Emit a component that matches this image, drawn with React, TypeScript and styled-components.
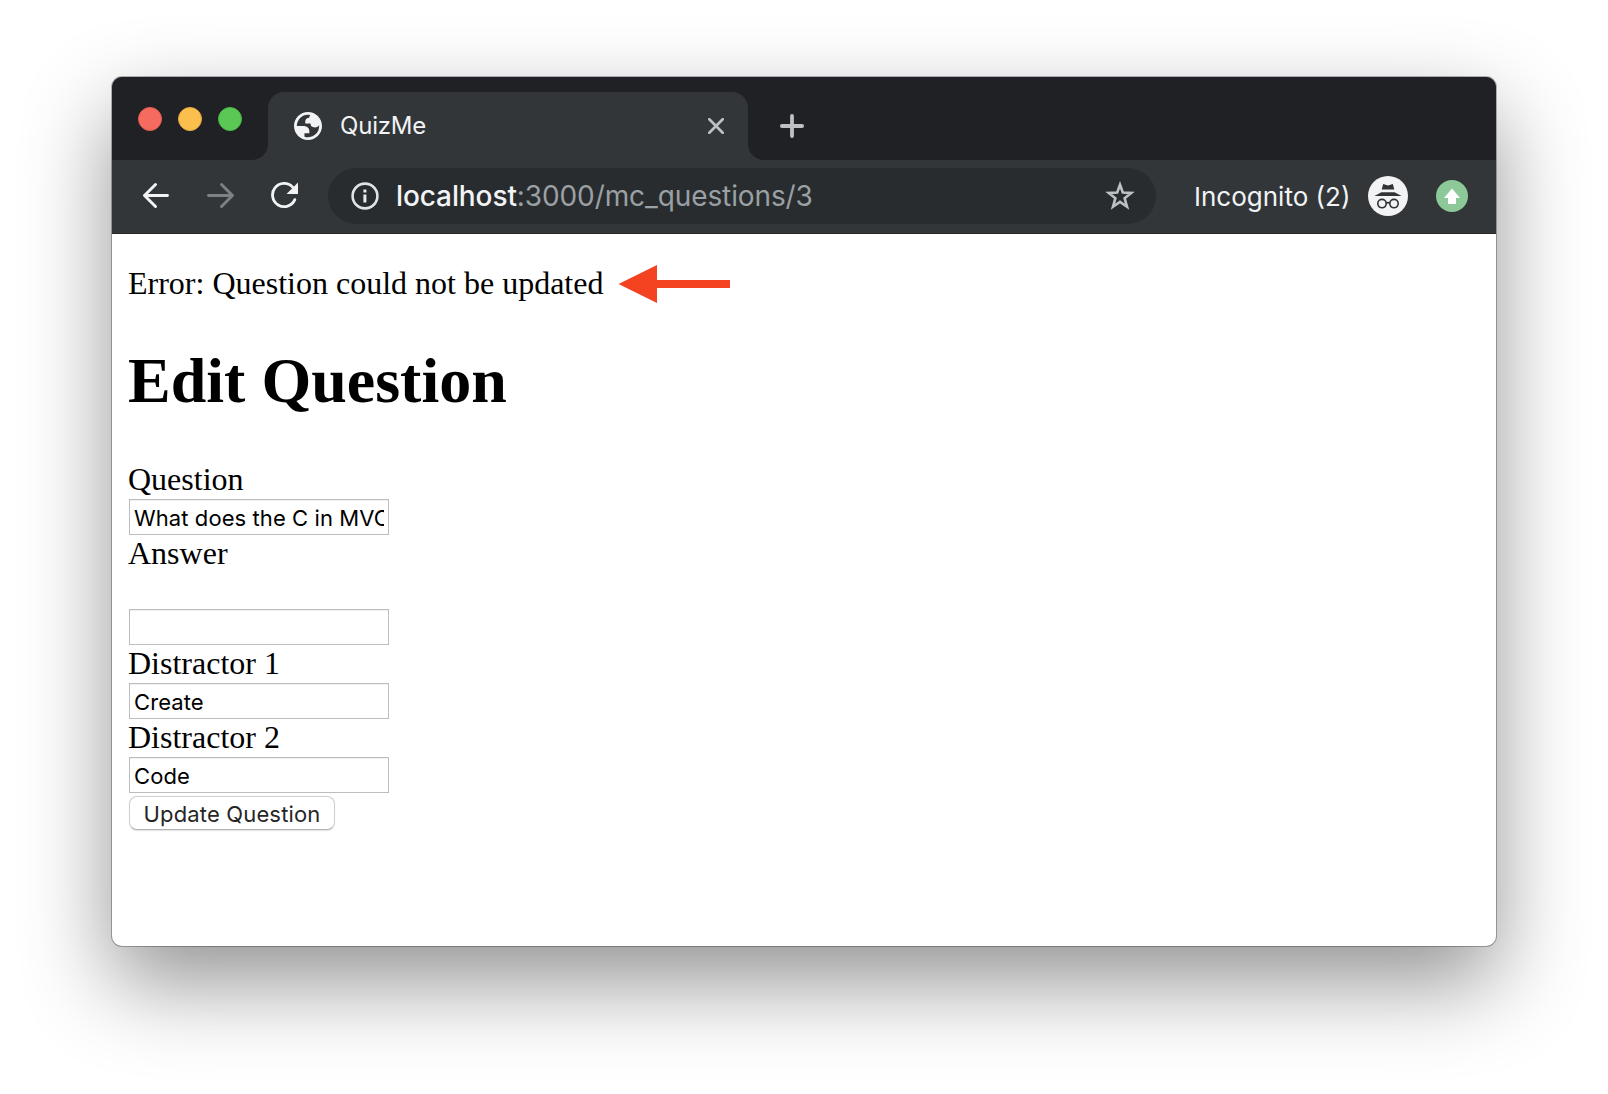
import React from "react";
import styled, { createGlobalStyle } from "styled-components";

const colors = {
  frame: "#202124",
  toolbar: "#323639",
  omnibox: "#282c2f",
  bright: "#f1f3f4",
  muted: "#9aa0a3",
};

const GlobalStyle = createGlobalStyle`
  *, *::before, *::after { box-sizing: border-box; }
  body { margin: 0; background: #fff; }
`;

const Desktop = styled.main`
  height: 1094px;
  overflow: hidden;
  padding: 77px 112px 0;
`;

const Window = styled.div`
  display: flex;
  flex-direction: column;
  width: 1384px;
  height: 869px;
  border-radius: 10px;
  overflow: hidden;
  background: #fff;
  box-shadow: 0 0 0 1px rgba(0, 0, 0, 0.28), 0 36px 88px rgba(0, 0, 0, 0.43);
`;

const TabStrip = styled.div`
  display: flex;
  height: 83px;
  background: ${colors.toolbar};
`;

const StripStart = styled.div`
  display: flex;
  gap: 16px;
  width: 156px;
  padding: 30px 0 0 26px;
  background: ${colors.frame};
  border-bottom-right-radius: 16px;
`;

const Light = styled.span<{ $fill: string; $edge: string }>`
  width: 24px;
  height: 24px;
  border-radius: 50%;
  background: ${(p) => p.$fill};
  border: 1px solid ${(p) => p.$edge};
`;

const TabSlot = styled.div`
  width: 480px;
  background: linear-gradient(${colors.frame} 40px, ${colors.toolbar} 40px);
  padding-top: 15px;
`;

const Tab = styled.div`
  display: flex;
  align-items: center;
  height: 68px;
  padding: 0 24px 0 26px;
  background: ${colors.toolbar};
  border-radius: 16px 16px 0 0;
`;

const TabTitle = styled.span`
  flex: 1;
  margin-left: 18px;
  font: 400 24px/32px Inter, sans-serif;
  letter-spacing: -0.2px;
  color: ${colors.bright};
`;

const StripEnd = styled.div`
  flex: 1;
  padding: 37px 0 0 32px;
  background: ${colors.frame};
  border-bottom-left-radius: 16px;
`;

const Toolbar = styled.div`
  display: flex;
  align-items: center;
  height: 74px;
  padding: 0 28px 1px 31px;
  background: ${colors.toolbar};
  border-bottom: 1px solid #242628;
`;

const NavButtons = styled.div`
  display: flex;
  gap: 36px;
  margin-right: 29px;
`;

const Omnibox = styled.div`
  display: flex;
  align-items: center;
  width: 828px;
  height: 56px;
  padding: 0 21px 0 23px;
  border-radius: 28px;
  background: ${colors.omnibox};
`;

const Url = styled.span`
  flex: 1;
  margin-left: 17px;
  font: 400 28px/36px Inter, sans-serif;
  letter-spacing: -0.1px;
  color: ${colors.muted};
`;

const Host = styled.span`
  font-weight: 450;
  color: ${colors.bright};
`;

const Profile = styled.span`
  width: 156px;
  margin: 1px 18px 0 38px;
  white-space: nowrap;
  font: 400 26px/36px Inter, sans-serif;
  color: ${colors.bright};
`;

const Extension = styled.span`
  display: flex;
  margin-left: 28px;
`;

const Page = styled.div`
  flex: 1;
  padding: 31px 16px 0;
  font: 32px/36px "Liberation Serif", serif;
  color: #000;
`;

const Notice = styled.p`
  display: flex;
  align-items: center;
  gap: 15px;
  height: 36px;
  margin: 0 0 44px;
`;

const Heading = styled.h1`
  margin: 0 0 44px;
  font-size: 64px;
  line-height: 72px;
  font-weight: 700;
`;

const Form = styled.form`
  display: flex;
  flex-direction: column;
  align-items: flex-start;
`;

const Label = styled.label<{ $spaced?: boolean }>`
  margin-bottom: ${(p) => (p.$spaced ? 38 : 2)}px;
`;

const Field = styled.input`
  width: 260px;
  height: 36px;
  margin: 0 0 0 1px;
  padding: 2px 4px 0;
  border: 1px solid #bdbdbd;
  border-radius: 0;
  box-shadow: inset 0 1px 0 #f0f0f0;
  outline: 0;
  background: #fff;
  font: 400 22px/30px Inter, sans-serif;
  letter-spacing: 0.08px;
  color: #000;
`;

const Submit = styled.button`
  width: 206px;
  height: 34px;
  margin: 3px 0 0 1px;
  padding: 1px 0 0;
  border: 1px solid #cfcfcf;
  border-bottom-color: #b4b4b4;
  border-radius: 8px;
  box-shadow: 0 1px 1px rgba(0, 0, 0, 0.12);
  background: #fff;
  white-space: nowrap;
  font: 400 22px/30px Inter, sans-serif;
  letter-spacing: 0.15px;
  color: #262626;
`;

const Icon = styled.svg`
  display: block;
  flex: none;
`;

const PointerIcon = styled(Icon)`
  margin: 0 0 -2px;
`;

const Globe = () => (
  <Icon width="28" height="28" viewBox="2 2 20 20" fill={colors.bright} fillRule="evenodd">
    <path d="M12 2C6.48 2 2 6.48 2 12s4.48 10 10 10 10-4.48 10-10S17.52 2 12 2zM4 12h4.4c3.407.022 4.922 1.73 4.543 5.127H9.488v2.47a8.004 8.004 0 0 0 10.498-8.083C19.327 12.504 18.332 13 17 13c-2.137 0-3.206-.916-3.206-2.75h-3.748c-.274-2.728.683-4.092 2.87-4.092 0-.975.327-1.597.811-1.97A8.004 8.004 0 0 0 4 12z" />
  </Icon>
);

const CloseTab = () => (
  <Icon width="16" height="16" viewBox="0 0 16 16" stroke="#bdc1c4" strokeWidth="2.7" strokeLinecap="round">
    <path d="M1.3 1.3L14.7 14.7M14.7 1.3L1.3 14.7" />
  </Icon>
);

const NewTab = () => (
  <Icon width="24" height="24" viewBox="0 0 24 24" stroke="#bdc1c6" strokeWidth="3.8" strokeLinecap="round">
    <path d="M12 1.9V22.1M1.9 12H22.1" />
  </Icon>
);

const NavArrow = ({ forward }: { forward?: boolean }) => (
  <Icon
    width="28"
    height="28"
    viewBox="0 0 28 28"
    fill="none"
    stroke={forward ? "#7d8183" : colors.bright}
    strokeWidth="2.9"
    strokeLinecap="round"
    strokeLinejoin="round"
  >
    <path d={forward ? "M1.5 13.5H25.5M14.5 2.5L25.5 13.5L14.5 24.5" : "M24.5 13.5H1.5M12.5 2.5L1.5 13.5L12.5 24.5"} />
  </Icon>
);

const Reload = () => (
  <Icon width="28" height="28" viewBox="0 0 28 28">
    <path d="M21.6 5.1A11.6 11.6 0 1 0 23.8 17.6" fill="none" stroke={colors.bright} strokeWidth="2.8" strokeLinecap="round" />
    <path d="M27 0.5V12H15.5Z" fill={colors.bright} />
  </Icon>
);

const Info = () => (
  <Icon width="28" height="28" viewBox="0 0 28 28">
    <circle cx="14" cy="14" r="12.4" fill="none" stroke="#e0e2e5" strokeWidth="2.6" />
    <path d="M12.4 7.6H15.4V10.4H12.4ZM12.4 12.6H15.4V20.6H12.4Z" fill="#e8eaed" />
  </Icon>
);

const Star = () => (
  <Icon width="30" height="30" viewBox="0 0 30 30">
    <path
      d="M15 3.8L17.8 11.5L26.3 11.9L19.6 17.2L22 25.7L15 20.9L8 25.7L10.4 17.2L3.7 11.9L12.2 11.5Z"
      fill="none"
      stroke="#bdc1c6"
      strokeWidth="2.6"
    />
  </Icon>
);

const Incognito = () => (
  <Icon width="40" height="40" viewBox="0 0 40 40">
    <circle cx="20" cy="20" r="20" fill={colors.bright} />
    <path d="M15.2 8L20 9.4L24.8 8L26.3 13.6H13.7Z" fill="#303437" />
    <path d="M13.4 16.2H26.6L33.6 20H6.4Z" fill="#303437" />
    <g fill="none" stroke="#303437" strokeWidth="1.6">
      <circle cx="14" cy="27.6" r="4.2" />
      <circle cx="26" cy="27.6" r="4.2" />
      <path d="M18.1 27.2Q20 26 21.9 27.2" />
    </g>
  </Icon>
);

const UpdateBadge = () => (
  <Icon width="32" height="32" viewBox="0 0 32 32">
    <circle cx="16" cy="16" r="16" fill="#8cc898" />
    <path d="M16 8.4L24 18H20V24H12V18H8Z" fill="#fff" />
  </Icon>
);

const Pointer = () => (
  <PointerIcon width="112" height="38" viewBox="0 0 112 38">
    <path d="M0.5 19L39 0V15H112V23H39V38Z" fill="#f44321" />
  </PointerIcon>
);

const lights = [
  { fill: "#f56b60", edge: "#e35c50" },
  { fill: "#fabf4d", edge: "#e3a842" },
  { fill: "#5bc755", edge: "#4bb446" },
];

const fields = [
  { id: "question", label: "Question", value: "What does the C in MVC stand for?" },
  { id: "answer", label: "Answer", value: "", spaced: true },
  { id: "distractor_1", label: "Distractor 1", value: "Create" },
  { id: "distractor_2", label: "Distractor 2", value: "Code" },
];

export default function App() {
  return (
    <Desktop>
      <GlobalStyle />
      <Window>
        <TabStrip>
          <StripStart>
            {lights.map((l) => (
              <Light key={l.fill} $fill={l.fill} $edge={l.edge} />
            ))}
          </StripStart>
          <TabSlot>
            <Tab>
              <Globe />
              <TabTitle>QuizMe</TabTitle>
              <CloseTab />
            </Tab>
          </TabSlot>
          <StripEnd>
            <NewTab />
          </StripEnd>
        </TabStrip>
        <Toolbar>
          <NavButtons>
            <NavArrow />
            <NavArrow forward />
            <Reload />
          </NavButtons>
          <Omnibox>
            <Info />
            <Url>
              <Host>localhost</Host>:3000/mc_questions/3
            </Url>
            <Star />
          </Omnibox>
          <Profile>Incognito (2)</Profile>
          <Incognito />
          <Extension>
            <UpdateBadge />
          </Extension>
        </Toolbar>
        <Page>
          <Notice>
            Error: Question could not be updated
            <Pointer />
          </Notice>
          <Heading>Edit Question</Heading>
          <Form onSubmit={(e) => e.preventDefault()}>
            {fields.map((f) => (
              <React.Fragment key={f.id}>
                <Label htmlFor={f.id} $spaced={f.spaced}>
                  {f.label}
                </Label>
                <Field id={f.id} type="text" defaultValue={f.value} />
              </React.Fragment>
            ))}
            <Submit type="submit">Update Question</Submit>
          </Form>
        </Page>
      </Window>
    </Desktop>
  );
}
